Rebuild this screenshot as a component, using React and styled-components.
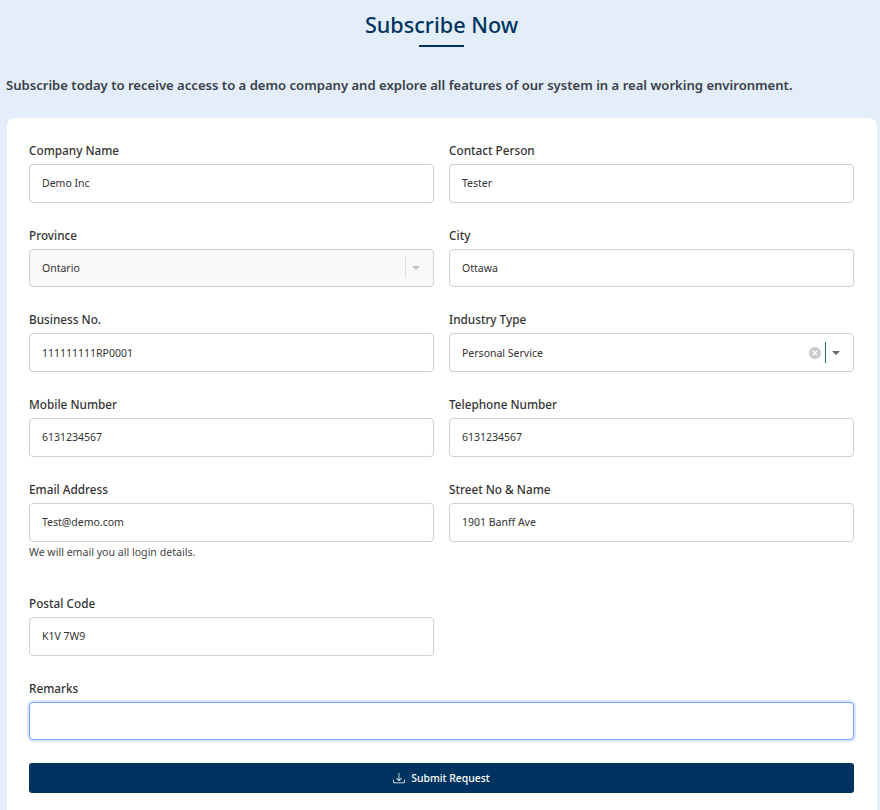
import React from "react";
import styled, { createGlobalStyle } from "styled-components";
import { BsDownload } from "react-icons/bs";

const GlobalStyle = createGlobalStyle`
  html, body {
    margin: 0;
    padding: 0;
    background: #e3eefa;
    overflow: hidden;
  }
  * {
    box-sizing: border-box;
  }
`;

const Page = styled.div`
  width: 880px;
  height: 810px;
  overflow: hidden;
  background: #e3eefa;
  font-family: "Noto Sans", "Open Sans", sans-serif;
  color: #333;
`;

const Header = styled.div`
  display: flex;
  flex-direction: column;
  align-items: center;
  padding: 9px 0 0 3px;
`;

const Title = styled.h2`
  margin: 0;
  font-size: 21.6px;
  line-height: 32px;
  font-weight: 500;
  color: #00335f;
`;

const Underline = styled.div`
  width: 45px;
  height: 2px;
  margin-top: 4px;
  background: #00335f;
`;

const Intro = styled.p`
  margin: 28px 0 0;
  padding-left: 6px;
  height: 20px;
  font-size: 13.08px;
  line-height: 20px;
  font-weight: 600;
  color: #3a3f47;
`;

const Card = styled.form`
  margin: 23px 3px 0 7px;
  padding: 20.8px 23px 30px 22px;
  background: #fff;
  border-radius: 8px;
`;

const FieldGrid = styled.div`
  display: grid;
  grid-template-columns: 405px 405px;
  column-gap: 15px;
`;

const Field = styled.div`
  grid-column: ${(p) => (p.$full ? "1 / -1" : "auto")};
  padding-bottom: ${(p) => (p.$full ? "0" : "21px")};
`;

const Label = styled.label`
  display: block;
  height: 21px;
  margin-bottom: 4px;
  font-size: 11.75px;
  line-height: 22px;
  font-weight: 500;
  color: #333;
`;

const Input = styled.input`
  display: block;
  width: 100%;
  height: 38.75px;
  padding: 0 12px;
  border: 1px solid ${(p) => (p.$focused ? "#6ea6fb" : "#ced0d3")};
  border-radius: 4px;
  outline: none;
  background: #fff;
  font-family: inherit;
  font-size: 10.5px;
  color: #333;
  box-shadow: ${(p) => (p.$focused ? "0 0 0 2px #dbe8fd" : "none")};
`;

const Help = styled.div`
  height: 50.25px;
  margin-top: 1px;
  margin-bottom: -1px;
  font-size: 10.6px;
  line-height: 18px;
  color: #444;
`;

const SelectBox = styled.div`
  display: flex;
  align-items: center;
  height: 38.75px;
  padding-left: 12px;
  border: 1px solid #ced0d3;
  border-radius: 4px;
  background: ${(p) => (p.$disabled ? "#f9f9f9" : "#fff")};
  font-size: 10.5px;
  color: #333;
`;

const SelectValue = styled.span`
  flex: 1;
`;

const ClearIcon = styled.svg`
  width: 14px;
  height: 14px;
  margin-right: 3px;
`;

const Divider = styled.span`
  width: 1px;
  height: 21px;
  background: ${(p) => (p.$disabled ? "#dcdcdc" : "#1f7a5c")};
`;

const ArrowSlot = styled.span`
  display: flex;
  justify-content: center;
  width: 19px;
  margin-right: 8px;
`;

const Arrow = styled.span`
  width: 0;
  height: 0;
  border-left: 4px solid transparent;
  border-right: 4px solid transparent;
  border-top: 4px solid ${(p) => (p.$disabled ? "#bdbdbd" : "#666")};
`;

const SubmitButton = styled.button`
  display: flex;
  align-items: center;
  justify-content: center;
  gap: 6px;
  width: 100%;
  height: 30px;
  margin-top: 23px;
  border: 0;
  border-radius: 3px;
  background: #00335f;
  color: #fff;
  font-family: inherit;
  font-size: 10.4px;
  font-weight: 500;
`;

function Select({ value, disabled, clearable }) {
  return (
    <SelectBox $disabled={disabled}>
      <SelectValue>{value}</SelectValue>
      {clearable && (
        <ClearIcon viewBox="0 0 14 14">
          <circle cx="7" cy="7" r="6" fill="#cbcbcb" />
          <path d="M4.8 4.8l4.4 4.4M9.2 4.8l-4.4 4.4" stroke="#fff" strokeWidth="1.4" />
        </ClearIcon>
      )}
      <Divider $disabled={disabled} />
      <ArrowSlot>
        <Arrow $disabled={disabled} />
      </ArrowSlot>
    </SelectBox>
  );
}

export default function App() {
  return (
    <Page>
      <GlobalStyle />
      <Header>
        <Title>Subscribe Now</Title>
        <Underline />
      </Header>
      <Intro>
        Subscribe today to receive access to a demo company and explore all features of our system in a real working environment.
      </Intro>
      <Card>
        <FieldGrid>
          <Field>
            <Label>Company Name</Label>
            <Input defaultValue="Demo Inc" />
          </Field>
          <Field>
            <Label>Contact Person</Label>
            <Input defaultValue="Tester" />
          </Field>
          <Field>
            <Label>Province</Label>
            <Select value="Ontario" disabled />
          </Field>
          <Field>
            <Label>City</Label>
            <Input defaultValue="Ottawa" />
          </Field>
          <Field>
            <Label>Business No.</Label>
            <Input defaultValue="111111111RP0001" />
          </Field>
          <Field>
            <Label>Industry Type</Label>
            <Select value="Personal Service" clearable />
          </Field>
          <Field>
            <Label>Mobile Number</Label>
            <Input defaultValue="6131234567" />
          </Field>
          <Field>
            <Label>Telephone Number</Label>
            <Input defaultValue="6131234567" />
          </Field>
          <div>
            <Label>Email Address</Label>
            <Input defaultValue="Test@demo.com" />
            <Help>We will email you all login details.</Help>
          </div>
          <Field>
            <Label>Street No &amp; Name</Label>
            <Input defaultValue="1901 Banff Ave" />
          </Field>
          <Field>
            <Label>Postal Code</Label>
            <Input defaultValue="K1V 7W9" />
          </Field>
          <div />
          <Field $full>
            <Label>Remarks</Label>
            <Input $focused />
          </Field>
        </FieldGrid>
        <SubmitButton type="button">
          <BsDownload size={12} />
          Submit Request
        </SubmitButton>
      </Card>
    </Page>
  );
}
